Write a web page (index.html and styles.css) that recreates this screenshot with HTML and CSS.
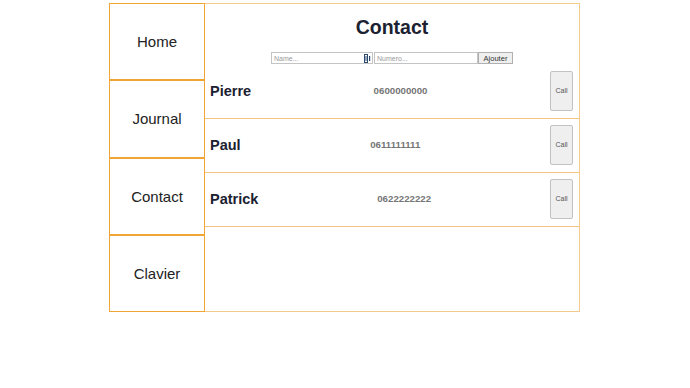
FILE: index.html
```html
<!DOCTYPE html>
<html lang="fr">
<head>
<meta charset="utf-8">
<title>Contact</title>
<link rel="stylesheet" href="styles.css">
</head>
<body>
<div class="app">
  <nav class="nav">
    <div class="nav-item">Home</div>
    <div class="nav-item">Journal</div>
    <div class="nav-item">Contact</div>
    <div class="nav-item">Clavier</div>
  </nav>
  <main class="main">
    <h1 class="title">Contact</h1>
    <form class="add-form">
      <span class="field">
        <input class="input input-name" type="text" placeholder="Name...">
        <svg class="autofill" width="7" height="9" viewBox="0 0 7 9"><rect x="0.5" y="0.5" width="3" height="8" fill="#fff" stroke="#2b4a6f" stroke-width="1"/><rect x="1.5" y="2" width="1" height="5" fill="#2b4a6f"/><rect x="5" y="2" width="1.2" height="5" fill="#2b4a6f"/></svg>
      </span>
      <input class="input input-num" type="text" placeholder="Numero...">
      <button class="btn-add" type="button">Ajouter</button>
    </form>
    <div class="contacts">
      <div class="row">
        <span class="name">Pierre</span>
        <span class="num">0600000000</span>
        <button class="call" type="button">Call</button>
      </div>
      <div class="row">
        <span class="name">Paul</span>
        <span class="num">0611111111</span>
        <button class="call" type="button">Call</button>
      </div>
      <div class="row">
        <span class="name">Patrick</span>
        <span class="num">0622222222</span>
        <button class="call" type="button">Call</button>
      </div>
    </div>
  </main>
</div>
</body>
</html>
```
FILE: styles.css
```css
* { box-sizing: border-box; }
html, body { margin: 0; padding: 0; background: #fff; }
body { font-family: "Liberation Sans", Arial, sans-serif; }

.app {
  width: 471px;
  height: 309px;
  margin: 3px 0 0 109px;
  display: flex;
}

.nav {
  width: 96px;
  display: flex;
  flex-direction: column;
}
.nav-item {
  flex: 1;
  border: 1px solid #f0a534;
  display: flex;
  align-items: center;
  justify-content: center;
  font-size: 15px;
  color: #222;
}

.main {
  flex: 1;
  border: 1px solid #f5c88c;
  border-left: none;
  display: flex;
  flex-direction: column;
}

.title {
  margin: 11px 0 13px;
  font-size: 19.5px;
  line-height: 24px;
  font-weight: bold;
  text-align: center;
  color: #1b2130;
}

.add-form {
  display: flex;
  justify-content: center;
  height: 12px;
  margin: 0;
}
.field { position: relative; display: flex; }
.input {
  height: 12px;
  padding: 0 2px;
  border: 1px solid #c4c4c4;
  font-family: "Liberation Sans", Arial, sans-serif;
  font-size: 7px;
  color: #333;
  outline: none;
}
.input::placeholder { color: #9a9a9a; }
.input-name { width: 102px; }
.input-num { width: 104px; margin-left: 1px; }
.autofill { position: absolute; right: 2px; top: 1.5px; }
.btn-add {
  width: 35px;
  height: 12px;
  padding: 0;
  border: 1px solid #b0b0b0;
  background: #efefef;
  font-family: "Liberation Sans", Arial, sans-serif;
  font-size: 7.5px;
  color: #333;
}

.contacts { display: flex; flex-direction: column; margin-top: 1px; }
.row {
  height: 54px;
  padding: 0 6px 2px 5px;
  border-bottom: 1px solid #f3c483;
  display: flex;
  align-items: center;
  justify-content: space-between;
}
.name {
  font-size: 14.5px;
  font-weight: bold;
  color: #1b2130;
}
.num {
  font-size: 9.7px;
  font-weight: bold;
  color: #757575;
}
.call {
  width: 23px;
  height: 40px;
  padding: 0;
  border: 1px solid #c2c2c2;
  border-radius: 2px;
  background: #efefef;
  font-family: "Liberation Sans", Arial, sans-serif;
  font-size: 7px;
  color: #555;
}
```
